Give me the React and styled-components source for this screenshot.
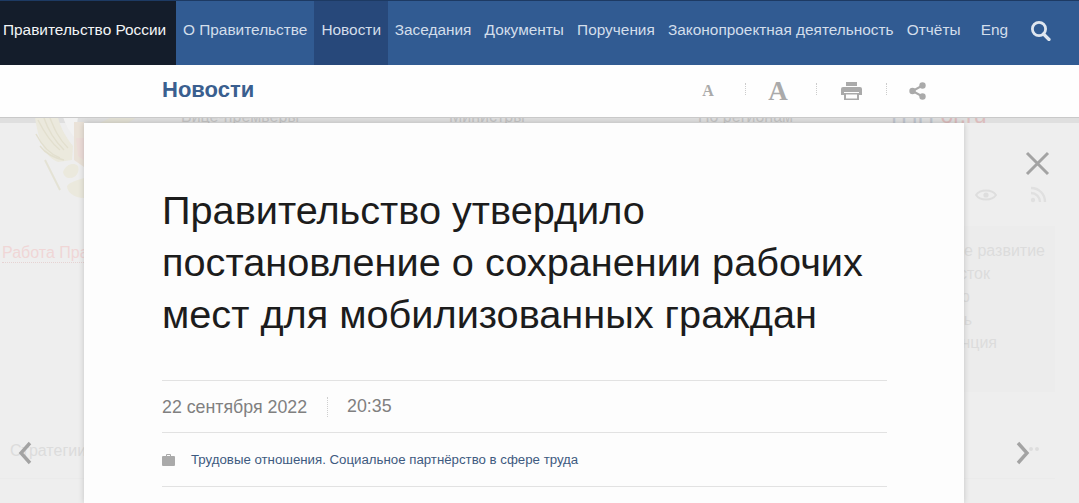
import React from 'react';
import styled, { createGlobalStyle } from 'styled-components';

const Global = createGlobalStyle`
  html, body { margin: 0; padding: 0; height: 100%; overflow: hidden; background: #eeeeee; }
  * { box-sizing: border-box; }
  body { font-family: "Liberation Sans", Arial, sans-serif; }
`;

const Page = styled.div`
  position: relative;
  width: 1079px;
  height: 503px;
  overflow: hidden;
  background: #eeeeee;
  display: flex;
  flex-direction: column;
`;

const Nav = styled.nav`
  position: relative;
  z-index: 3;
  flex: none;
  height: 65px;
  display: flex;
  background: #315b92;
  border-top: 1px solid #1d3a63;
`;

const Brand = styled.a`
  flex: none;
  width: 176px;
  padding: 0 0 6px 3px;
  display: flex;
  align-items: center;
  background: #141d2b;
  color: #f3f5f7;
  font-size: 15.4px;
  white-space: nowrap;
`;

const NavItems = styled.div`
  display: flex;
  flex: 1;
`;

const NavItem = styled.a`
  flex: none;
  display: flex;
  align-items: center;
  padding: 0 ${p => p.$pad ?? 6.6}px 6px;
  margin-right: ${p => p.$gap ?? 0}px;
  color: #d3deeb;
  font-size: 15.4px;
  white-space: nowrap;
  background: ${p => (p.$active ? '#27487a' : 'transparent')};
`;

const SearchButton = styled.span`
  flex: none;
  margin-left: 15px;
  padding-bottom: 6px;
  display: flex;
  align-items: center;
  color: #dfe6ef;
`;

const SubHeader = styled.header`
  position: relative;
  z-index: 3;
  flex: none;
  height: 53px;
  padding-left: 162px;
  display: flex;
  align-items: center;
  background: #fefefe;
  border-bottom: 1px solid #c9c9c9;
`;

const SubTitle = styled.h2`
  margin: 0 0 2px;
  width: 509px;
  color: #3a5f8f;
  font-size: 22px;
  font-weight: 700;
  line-height: 50px;
`;

const Tools = styled.div`
  display: flex;
  align-items: center;
  height: 30px;
`;

const Tool = styled.span`
  width: ${p => p.$w}px;
  height: 30px;
  padding-right: ${p => p.$shift || 0}px;
  display: flex;
  align-items: center;
  justify-content: center;
  color: #aaaaaa;
  font-family: "Liberation Serif", serif;
  font-weight: 700;
  font-size: ${p => p.$size || 14}px;
`;

const ToolDivider = styled.i`
  flex: none;
  width: 1px;
  height: 12px;
  margin-bottom: 5px;
  border-left: 1px dotted #cccccc;
`;

const Backdrop = styled.div`
  position: absolute;
  inset: 0;
  z-index: 0;
`;

const Band = styled.div`
  position: absolute;
  top: 117px;
  left: 0;
  right: 0;
  height: 6px;
  background: #dfdfdf;
`;

const Ghost = styled.span`
  position: absolute;
  left: ${p => (p.$x === undefined ? 'auto' : `${p.$x}px`)};
  right: ${p => (p.$r === undefined ? 'auto' : `${p.$r}px`)};
  top: ${p => p.$y}px;
  color: ${p => p.$color || '#dcdcdc'};
  font-size: ${p => p.$size || 16}px;
  line-height: 1;
  white-space: nowrap;
`;

const GhostLink = styled(Ghost)`
  padding-bottom: 1px;
  border-bottom: 1px dotted #e6d2d2;
`;

const GhostAccent = styled.span`
  color: #dcbcbc;
`;

const SidePanel = styled.div`
  position: absolute;
  left: 964px;
  top: 226px;
  width: 91px;
  height: 166px;
  background: #ececec;
`;

const GhostRule = styled.div`
  position: absolute;
  top: 478px;
  left: 0;
  width: 1055px;
  height: 1px;
  background: #ebebeb;
`;

const GhostIcon = styled.svg`
  position: absolute;
  left: ${p => p.$x}px;
  top: ${p => p.$y}px;
`;

const Modal = styled.main`
  position: relative;
  z-index: 2;
  margin: 5px 0 0 84px;
  width: 880px;
  height: 380px;
  flex: none;
  background: #fdfdfd;
  box-shadow: 0 0 6px rgba(0, 0, 0, 0.18);
  padding: 61px 78px 0;
`;

const Title = styled.h1`
  margin: 0;
  width: 722px;
  color: #1c1c1c;
  font-size: 39.7px;
  font-weight: 400;
  line-height: 52px;
`;

const MetaRow = styled.div`
  margin-top: 40px;
  width: 725px;
  height: 53px;
  display: flex;
  align-items: center;
  border-top: 1px solid #e2e2e2;
  border-bottom: 1px solid #e2e2e2;
  color: #808080;
  font-size: 17.8px;
`;

const DateText = styled.time`
  padding-right: 20px;
  height: 20px;
  line-height: 20px;
  border-right: 1px dotted #cfcfcf;
`;

const TimeText = styled.time`
  padding-left: 19px;
`;

const TagRow = styled.div`
  width: 725px;
  height: 54px;
  display: flex;
  align-items: center;
  gap: 16px;
  border-bottom: 1px solid #e2e2e2;
`;

const TagLink = styled.a`
  color: #3d5a80;
  font-size: 13.25px;
`;

const CloseIcon = styled.svg`
  position: absolute;
  z-index: 2;
  left: 1025px;
  top: 151px;
`;

const Chevron = styled.svg`
  position: absolute;
  z-index: 2;
  top: 441px;
  left: ${p => p.$x}px;
`;

const feathers = [
  'M38 120 C44 132 50 142 60 150',
  'M44 118 C48 130 54 140 64 150',
  'M50 118 C54 128 58 138 68 148',
  'M36 134 C42 146 50 154 60 158',
  'M40 146 C46 154 54 158 64 160',
];

const Emblem = () => (
  <GhostIcon $x={30} $y={117} width="110" height="84" viewBox="30 117 110 84">
    <path d="M35 117 H58 C60 128 68 140 73 146 L72 160 L58 162 C46 158 38 140 35 117Z" fill="#ebe9dd" />
    {feathers.map(d => (
      <path key={d} d={d} fill="none" stroke="#e2dfce" strokeWidth="1.4" />
    ))}
    <path d="M63 117 H78 L75 138 C70 132 66 126 63 117Z" fill="#f2f2f2" />
    <path d="M74 122 H84 V167 L74 160Z" fill="#eae2d8" />
    <path d="M76 138 H84 V160 L78 156Z" fill="#ecdcd8" />
    <path d="M45 160 L60 190" stroke="#e4e2d4" strokeWidth="2" />
    <path d="M63 172 C66 164 74 162 78 166 C80 172 76 178 70 178 C66 178 64 176 63 172Z" fill="#ebe9dd" />
    <path d="M84 178 V198 C74 198 67 192 67 186 C70 182 78 180 84 178Z" fill="#ebe9dd" />
    <path d="M100 123 L112 117 H137 L128 123Z" fill="#e2e0d4" />
  </GhostIcon>
);

export default function App() {
  return (
    <Page>
      <Global />
      <Backdrop>
        <Band />
        <Emblem />
        <Ghost $x={181} $y={109} $color="#c4c4c4">Вице-премьеры</Ghost>
        <Ghost $x={449} $y={109} $color="#c4c4c4">Министры</Ghost>
        <Ghost $x={698} $y={109} $color="#c4c4c4">По регионам</Ghost>
        <Ghost $x={887} $y={104} $size={23} $color="#bfc5ce">ТПП <GhostAccent>or.ru</GhostAccent></Ghost>
        <GhostLink $x={2} $y={245} $color="#f0d6d6">Работа Правительства</GhostLink>
        <SidePanel />
        <GhostRule />
        <Ghost $r={34} $y={243}>Долгосрочное развитие</Ghost>
        <Ghost $r={89} $y={266}>Дальний Восток</Ghost>
        <Ghost $r={109} $y={289}>Мир</Ghost>
        <Ghost $r={107} $y={312}>Связь</Ghost>
        <Ghost $r={82} $y={335}>Конкуренция</Ghost>
        <Ghost $x={10} $y={443}>Стратегии</Ghost>
        <GhostIcon $x={975} $y={188} width="22" height="14" viewBox="0 0 22 14">
          <path d="M1 7 C5 1 17 1 21 7 C17 13 5 13 1 7Z" fill="none" stroke="#dedede" strokeWidth="2" />
          <circle cx="11" cy="7" r="2.6" fill="#dedede" />
        </GhostIcon>
        <GhostIcon $x={1030} $y={186} width="17" height="17" viewBox="0 0 17 17">
          <circle cx="3" cy="14" r="2.2" fill="#e0e0e0" />
          <path d="M1 7 C6 7 10 11 10 16 M1 2 C9 2 15 8 15 16" fill="none" stroke="#e0e0e0" strokeWidth="2.4" />
        </GhostIcon>
        <GhostIcon $x={1028} $y={446} width="12" height="6" viewBox="0 0 12 6">
          <circle cx="3" cy="3" r="2" fill="#dddddd" />
          <circle cx="9" cy="3" r="2" fill="#dddddd" />
        </GhostIcon>
      </Backdrop>

      <Nav>
        <Brand>Правительство России</Brand>
        <NavItems>
          <NavItem $pad={7}>О Правительстве</NavItem>
          <NavItem $pad={7} $active>Новости</NavItem>
          <NavItem>Заседания</NavItem>
          <NavItem>Документы</NavItem>
          <NavItem>Поручения</NavItem>
          <NavItem>Законопроектная деятельность</NavItem>
          <NavItem $gap={7}>Отчёты</NavItem>
          <NavItem>Eng</NavItem>
          <SearchButton>
            <svg width="21" height="21" viewBox="0 0 21 21">
              <circle cx="9" cy="9" r="6.6" fill="none" stroke="currentColor" strokeWidth="2.8" />
              <path d="M13.5 14 L19 19.5" stroke="currentColor" strokeWidth="3.2" strokeLinecap="round" />
            </svg>
          </SearchButton>
        </NavItems>
      </Nav>

      <SubHeader>
        <SubTitle>Новости</SubTitle>
        <Tools>
          <Tool $w={74} $size={16}>A</Tool>
          <ToolDivider />
          <Tool $w={70} $size={27} $shift={6}>A</Tool>
          <ToolDivider />
          <Tool $w={69}>
            <svg width="21" height="18" viewBox="0 0 21 18">
              <path fill="currentColor" d="M5 0h11v4H5z" />
              <path fill="currentColor" d="M2 5h17a2 2 0 0 1 2 2v6h-3v-3H3v3H0V7a2 2 0 0 1 2-2z" />
              <path fill="currentColor" fillRule="evenodd" d="M3 11h15v7H3zM5 12.5v4h11v-4z" />
            </svg>
          </Tool>
          <ToolDivider />
          <Tool $w={61}>
            <svg width="17" height="18" viewBox="0 0 17 18">
              <path d="M13.5 3.5 L3.5 9 L13.5 14.5" fill="none" stroke="currentColor" strokeWidth="2" />
              <circle cx="13.5" cy="3.5" r="3.2" fill="currentColor" />
              <circle cx="3.5" cy="9" r="3.2" fill="currentColor" />
              <circle cx="13.5" cy="14.5" r="3.2" fill="currentColor" />
            </svg>
          </Tool>
        </Tools>
      </SubHeader>

      <Modal>
        <Title>Правительство утвердило постановление о сохранении рабочих мест для мобилизованных граждан</Title>
        <MetaRow>
          <DateText>22 сентября 2022</DateText>
          <TimeText>20:35</TimeText>
        </MetaRow>
        <TagRow>
          <svg width="13" height="12" viewBox="0 0 13 12">
            <path fill="#aaaaaa" d="M4 2V1a1 1 0 0 1 1-1h3a1 1 0 0 1 1 1v1h3a1 1 0 0 1 1 1v8a1 1 0 0 1-1 1H1a1 1 0 0 1-1-1V3a1 1 0 0 1 1-1zm1 0h3V1H5z" fillRule="evenodd" />
          </svg>
          <TagLink>Трудовые отношения. Социальное партнёрство в сфере труда</TagLink>
        </TagRow>
      </Modal>

      <CloseIcon width="25" height="25" viewBox="0 0 25 25">
        <path d="M2 2 L23 23 M23 2 L2 23" stroke="#a3a3a3" strokeWidth="3" />
      </CloseIcon>
      <Chevron $x={18} width="14" height="24" viewBox="0 0 14 24">
        <path d="M12 2 L3 12 L12 22" fill="none" stroke="#a3a3a3" strokeWidth="3.4" />
      </Chevron>
      <Chevron $x={1016} width="14" height="24" viewBox="0 0 14 24">
        <path d="M2 2 L11 12 L2 22" fill="none" stroke="#a3a3a3" strokeWidth="3.4" />
      </Chevron>
    </Page>
  );
}
